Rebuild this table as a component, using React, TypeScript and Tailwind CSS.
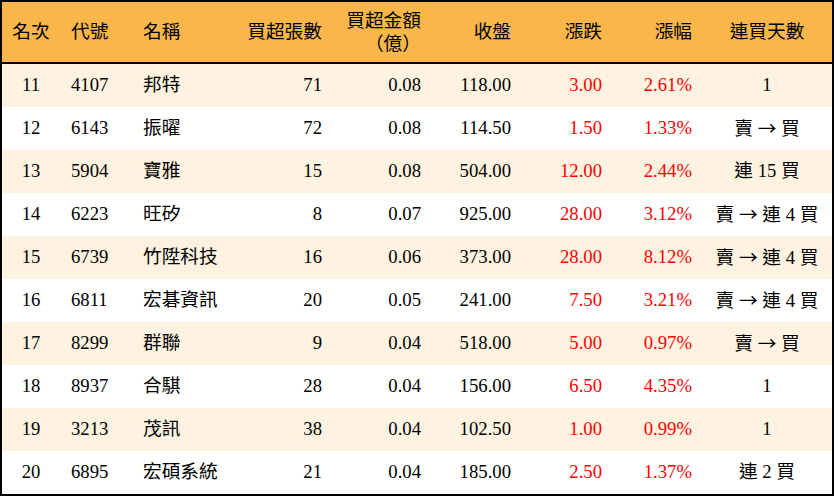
import React from "react";

type Row = {
  rank: number;
  code: string;
  name: string;
  lots: number;
  amount: string;
  close: string;
  change: string;
  pct: string;
  streak: string;
};

const rows: Row[] = [
  { rank: 11, code: "4107", name: "邦特", lots: 71, amount: "0.08", close: "118.00", change: "3.00", pct: "2.61%", streak: "1" },
  { rank: 12, code: "6143", name: "振曜", lots: 72, amount: "0.08", close: "114.50", change: "1.50", pct: "1.33%", streak: "賣 → 買" },
  { rank: 13, code: "5904", name: "寶雅", lots: 15, amount: "0.08", close: "504.00", change: "12.00", pct: "2.44%", streak: "連 15 買" },
  { rank: 14, code: "6223", name: "旺矽", lots: 8, amount: "0.07", close: "925.00", change: "28.00", pct: "3.12%", streak: "賣 → 連 4 買" },
  { rank: 15, code: "6739", name: "竹陞科技", lots: 16, amount: "0.06", close: "373.00", change: "28.00", pct: "8.12%", streak: "賣 → 連 4 買" },
  { rank: 16, code: "6811", name: "宏碁資訊", lots: 20, amount: "0.05", close: "241.00", change: "7.50", pct: "3.21%", streak: "賣 → 連 4 買" },
  { rank: 17, code: "8299", name: "群聯", lots: 9, amount: "0.04", close: "518.00", change: "5.00", pct: "0.97%", streak: "賣 → 買" },
  { rank: 18, code: "8937", name: "合騏", lots: 28, amount: "0.04", close: "156.00", change: "6.50", pct: "4.35%", streak: "1" },
  { rank: 19, code: "3213", name: "茂訊", lots: 38, amount: "0.04", close: "102.50", change: "1.00", pct: "0.99%", streak: "1" },
  { rank: 20, code: "6895", name: "宏碩系統", lots: 21, amount: "0.04", close: "185.00", change: "2.50", pct: "1.37%", streak: "連 2 買" },
];

const cols = "grid grid-cols-[58px_75px_105px_92px_99px_90px_91px_90px_130px]";

// the arrow should take a full CJK cell, like in the source sheet
const Streak = ({ text }: { text: string }) => {
  const parts = text.split("→");
  if (parts.length === 1) return <>{text}</>;
  return (
    <>
      {parts[0]}
      <span style={{ fontFamily: '"Noto Sans CJK TC", sans-serif' }}>→</span>
      {parts[1]}
    </>
  );
};

const App: React.FC = () => {
  return (
    <div
      className="w-[834px] h-[496px] border-2 border-black bg-white text-black text-[18.7px] leading-none"
      style={{ fontFamily: '"Liberation Serif", "Noto Sans CJK TC", serif' }}
    >
      <div className={`${cols} h-[62px] bg-[#f9b74b] border-b-2 border-black items-center`}>
        <div className="text-center">名次</div>
        <div className="pl-[11px]">代號</div>
        <div className="pl-[8px]">名稱</div>
        <div className="text-right pr-[10px]">買超張數</div>
        <div className="flex flex-col items-end gap-[2px] pr-[10px]">
          <div>買超金額</div>
          {/* JP glyphs: parens hug the outer edge of their cell */}
          <div style={{ fontFamily: '"Noto Sans CJK JP", sans-serif' }}>（億）</div>
        </div>
        <div className="text-right pr-[10px]">收盤</div>
        <div className="text-right pr-[10px]">漲跌</div>
        <div className="text-right pr-[10px]">漲幅</div>
        <div className="text-center">連買天數</div>
      </div>

      {rows.map((r, i) => (
        <div
          key={r.rank}
          className={`${cols} h-[43px] items-center ${i % 2 === 0 ? "bg-[#fdf3e0]" : "bg-white"}`}
        >
          <div className="text-center">{r.rank}</div>
          <div className="pl-[11px]">{r.code}</div>
          <div className="pl-[8px]">{r.name}</div>
          <div className="text-right pr-[10px]">{r.lots}</div>
          <div className="text-right pr-[10px]">{r.amount}</div>
          <div className="text-right pr-[10px]">{r.close}</div>
          <div className="text-right pr-[10px] text-[#ff0000]">{r.change}</div>
          <div className="text-right pr-[10px] text-[#ff0000]">{r.pct}</div>
          <div className="text-center">
            <Streak text={r.streak} />
          </div>
        </div>
      ))}
    </div>
  );
};

export default App;
